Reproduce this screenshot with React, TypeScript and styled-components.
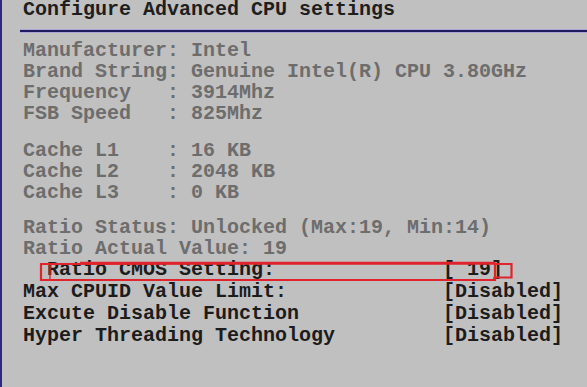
import React from "react";
import styled, { createGlobalStyle } from "styled-components";

const Global = createGlobalStyle`
  html, body { margin: 0; padding: 0; background: #c0c0c0; }
  #root { width: 587px; height: 387px; overflow: hidden; }
`;

const Screen = styled.div`
  position: relative;
  width: 587px;
  height: 387px;
  box-sizing: border-box;
  background: #c0c0c0;
  border-left: 2px solid #2b2a7e;
  padding-left: 21px;
  font-family: "Courier New", "Nimbus Mono PS", "Liberation Mono", monospace;
  font-size: 20px;
  font-weight: bold;
  overflow: hidden;
`;

const Title = styled.div`
  padding-top: 1px;
  height: 18px;
  line-height: 18px;
  color: #1e1e1e;
  white-space: pre;
`;

const Rule = styled.div`
  margin: 11px 0 0 -3px;
  height: 2px;
  background: #1f1b5c;
  box-shadow: 0 -1px 0 #aaa6d6, 0 1px 0 #aaa6d6;
`;

const InfoGroup = styled.div<{ $top: number }>`
  margin-top: ${(p) => p.$top}px;
  display: flex;
  flex-direction: column;
`;

const InfoLine = styled.div`
  height: 21px;
  line-height: 21px;
  color: #6d6d6d;
  white-space: pre;
`;

const Settings = styled.div`
  display: flex;
  flex-direction: column;
`;

const SettingRow = styled.div<{ $indent?: boolean }>`
  display: grid;
  grid-template-columns: 420px auto;
  height: 22px;
  line-height: 22px;
  color: #1c1c1c;
  white-space: pre;
  & > span:first-child {
    padding-left: ${(p) => (p.$indent ? 24 : 0)}px;
  }
`;

const Highlight = styled.svg`
  position: absolute;
  left: 0;
  top: 0;
  pointer-events: none;
`;

const groups = [
  [
    "Manufacturer: Intel",
    "Brand String: Genuine Intel(R) CPU 3.80GHz",
    "Frequency   : 3914Mhz",
    "FSB Speed   : 825Mhz",
  ],
  ["Cache L1    : 16 KB", "Cache L2    : 2048 KB", "Cache L3    : 0 KB"],
  ["Ratio Status: Unlocked (Max:19, Min:14)", "Ratio Actual Value: 19"],
];

const tops = [8, 16, 14];

const settings = [
  { label: "Ratio CMOS Setting:", value: "[ 19]", indent: true },
  { label: "Max CPUID Value Limit:", value: "[Disabled]" },
  { label: "Excute Disable Function", value: "[Disabled]" },
  { label: "Hyper Threading Technology", value: "[Disabled]" },
];

export default function App() {
  return (
    <>
      <Global />
      <Screen>
        <Title>Configure Advanced CPU settings</Title>
        <Rule />
        {groups.map((g, i) => (
          <InfoGroup key={i} $top={tops[i]}>
            {g.map((line) => (
              <InfoLine key={line}>{line}</InfoLine>
            ))}
          </InfoGroup>
        ))}
        <Settings>
          {settings.map((s) => (
            <SettingRow key={s.label} $indent={s.indent}>
              <span>{s.label}</span>
              <span>{s.value}</span>
            </SettingRow>
          ))}
        </Settings>
        <Highlight width="587" height="387" viewBox="0 0 587 387">
          <g fill="none" stroke="#e0232c" strokeWidth="2.2" strokeLinejoin="miter">
            <path d="M39 264 L493 263.5 L493 280 L39 280 Z" />
            <path d="M78 262.5 L493 262.5" strokeWidth="1.4" />
            <path d="M48 265 L48 279" strokeWidth="1.4" />
            <path d="M493 264 L509.5 264 L509.5 277.5 L493 277.5" />
          </g>
        </Highlight>
      </Screen>
    </>
  );
}
